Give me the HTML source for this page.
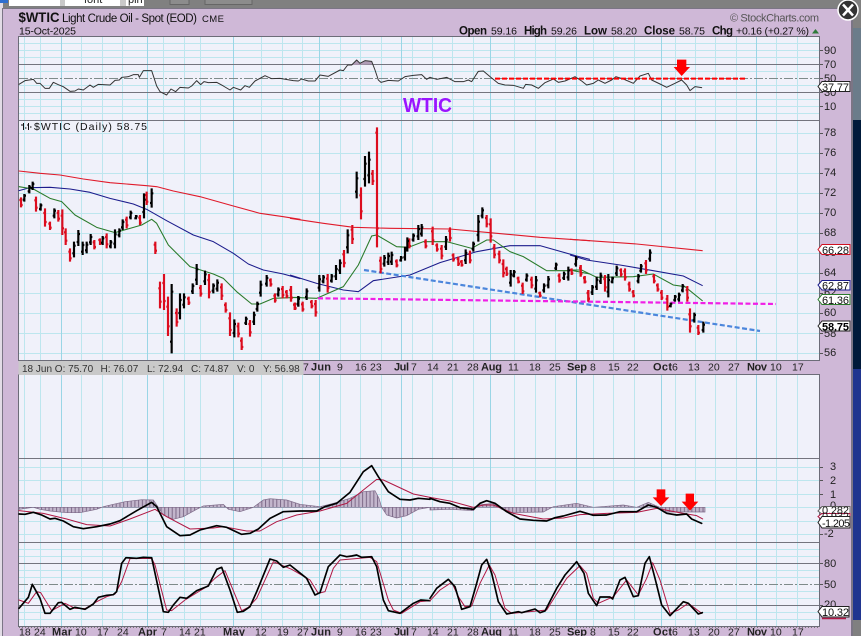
<!DOCTYPE html>
<html lang="en">
<head>
<meta charset="utf-8">
<title>$WTIC Light Crude Oil - Spot (EOD)</title>
<style>
html,body{margin:0;padding:0;width:861px;height:636px;overflow:hidden;background:#808080}
svg{display:block;font-family:"Liberation Sans",Arial,sans-serif}
.l{fill:none;stroke-linejoin:round;stroke-linecap:round}
</style>
</head>
<body>
<svg width="861" height="636" viewBox="0 0 861 636" xmlns="http://www.w3.org/2000/svg">
<defs>
<pattern id="h" patternUnits="userSpaceOnUse" width="11.2" height="12"><rect width="11.2" height="12" fill="#c3b6cc"/><rect width="3" height="12" fill="#7d6a88"/></pattern>
</defs>
<!-- window chrome -->
<rect width="861" height="636" fill="#808080"/>
<rect x="0" y="0" width="3" height="636" fill="#e2dce6"/>
<rect x="0" y="0" width="8" height="3" fill="#2f6fd0"/>
<rect x="9" y="0" width="51" height="6" fill="#fff"/>
<rect x="60" y="0" width="5" height="6" fill="#c9c9c9"/>
<rect x="65" y="0" width="55" height="6" fill="#fff"/>
<rect x="120" y="0" width="6" height="6" fill="#c9c9c9"/>
<rect x="126" y="0" width="18" height="6" fill="#fff"/>
<text x="84" y="3" font-size="11" fill="#222">font</text>
<text x="128" y="3" font-size="11" fill="#222">pin</text>
<path d="M170 0V4.5H189V0M205 0V4.5H252V0" fill="#8c8c8c" stroke="#666"/>
<rect x="853" y="28" width="8" height="92" fill="#6b7c8a"/>
<rect x="853" y="120" width="8" height="249" fill="#001a3a"/>
<rect x="853" y="369" width="8" height="251" fill="#20358f"/>
<rect x="2" y="8" width="851" height="628" fill="#7b7585"/>
<rect x="3" y="9" width="848" height="627" fill="#cfb8d7"/>

<!-- panels -->
<rect x="18.5" y="36.5" width="801" height="324" fill="#f0f1fa"/>
<rect x="18.5" y="374.5" width="801" height="252" fill="#f0f1fa"/>

<!-- horizontal light grid -->
<path stroke="#bde6ee" stroke-width="1" fill="none" d="M19 43.5H820M19 50.5H820M19 57.5H820M19 71.5H820M19 85.5H820M19 99.5H820M19 106.5H820M19 113.5H820
M19 133.5H820M19 153.5H820M19 173.5H820M19 193.5H820M19 213.5H820M19 233.5H820M19 253.5H820M19 273.5H820M19 293.5H820M19 313.5H820M19 333.5H820M19 353.5H820
M19 467.5H820M19 480.5H820M19 494.5H820M19 507.5H820M19 521.5H820M19 534.5H820
M19 549.5H820M19 556.5H820M19 570.5H820M19 577.5H820M19 591.5H820M19 598.5H820M19 612.5H820M19 619.5H820"/>
<!-- vertical light grid -->
<path stroke="#bde6ee" stroke-width="1" fill="none" d="M24.5 37V360M24.5 375V626M40.5 37V360M40.5 375V626M81.5 37V360M81.5 375V626M102.5 37V360M102.5 375V626M122.5 37V360M122.5 375V626M163.5 37V360M163.5 375V626M184.5 37V360M184.5 375V626M200.5 37V360M200.5 375V626M261.5 37V360M261.5 375V626M282.5 37V360M282.5 375V626M302.5 37V360M302.5 375V626M340.5 37V360M340.5 375V626M360.5 37V360M360.5 375V626M381.5 37V360M381.5 375V626M412.5 37V360M412.5 375V626M432.5 37V360M432.5 375V626M452.5 37V360M452.5 375V626M473.5 37V360M473.5 375V626M514.5 37V360M514.5 375V626M535.5 37V360M535.5 375V626M555.5 37V360M555.5 375V626M593.5 37V360M593.5 375V626M613.5 37V360M613.5 375V626M634.5 37V360M634.5 375V626M675.5 37V360M675.5 375V626M695.5 37V360M695.5 375V626M715.5 37V360M715.5 375V626M736.5 37V360M736.5 375V626M776.5 37V360M776.5 375V626M797.5 37V360M797.5 375V626"/>
<path stroke="#9ad6e6" stroke-width="1" fill="none" d="M61.5 37V360M61.5 375V626M147.5 37V360M147.5 375V626M233.5 37V360M233.5 375V626M319.5 37V360M319.5 375V626M401.5 37V360M401.5 375V626M490.5 37V360M490.5 375V626M576.5 37V360M576.5 375V626M661.5 37V360M661.5 375V626M756.5 37V360M756.5 375V626"/>

<!-- dark horizontal rules -->
<path stroke="#74747e" stroke-width="1" fill="none" d="M19 64.5H819M19 92.5H819M19 120.5H819M19 458.5H819M19 542.5H819M19 563.5H819M19 605.5H819"/>
<path stroke="#7e8a8a" stroke-width="1" fill="none" stroke-dasharray="9 2 2 2" d="M19 78.5H819M19 584.5H819"/>
<!-- panel borders -->
<path stroke="#6c6c78" stroke-width="1" fill="none" d="M18.5 36.5H819.5V360.5H18.5ZM18.5 374.5H819.5V626.5H18.5Z"/>
<path stroke="#777" stroke-width="1" fill="none" stroke-dasharray="1 2" d="M19 627.5H819"/>

<!-- RSI -->
<g transform="scale(.33333)">
<path fill="#b09cb6" d="M1058 195L1070 180L1080 190L1095 182L1115 184L1120 193Z"/>
<polyline class="l" stroke="#333" stroke-width="3" points="57,253 75,242 100,238 110,250 120,250 135,265 148,265 160,247 175,254 190,260 210,274 225,273 235,267 250,270 270,255 280,262 295,253 330,255 345,241 358,240 365,232 385,230 400,224 415,224 418,232 430,212 455,212 470,258 480,275 500,285 513,267 527,275 540,262 565,264 575,258 590,242 602,254 612,245 625,248 650,247 670,258 690,270 700,262 722,270 735,257 748,262 765,243 795,227 815,236 840,235 880,242 895,243 905,237 925,243 945,243 960,225 985,229 1020,210 1030,212 1043,195 1055,195 1070,180 1080,190 1095,182 1115,184 1125,210 1135,240 1143,247 1165,241 1195,243 1215,230 1240,226 1265,224 1280,238 1290,232"/>
</g>
<g transform="translate(430,0) scale(.33333)">
<polyline class="l" stroke="#333" stroke-width="3" points="0,232 20,238 50,232 75,245 100,245 115,240 125,245 145,214 160,213 180,230 205,250 225,255 250,256 280,265 287,253 305,255 325,265 345,248 370,237 385,247 405,243 435,230 455,243 470,255 490,250 505,240 525,250 545,240 558,230 580,237 610,250 630,228 655,220 665,240 690,252 710,262 735,250 755,240 770,255 780,272 795,260 815,263"/>
<path stroke="#f00" stroke-width="6" fill="none" stroke-dasharray="15 6" d="M195 236H945"/>
<path fill="#f00" d="M741 179H769V201H780L755 228L731 201H741Z"/>
</g>
<text x="403" y="112" font-size="20" font-weight="bold" fill="#9a14ff" textLength="49" lengthAdjust="spacingAndGlyphs">WTIC</text>

<!-- price moving averages & trendlines -->
<g transform="translate(0,120) scale(.33333)" class="l" stroke-width="3.2">
<polyline fill="none" stroke="#e01a2a" points="57,153 120,160 180,165 250,177 330,188 440,197 470,200 520,213 600,230 700,258 780,280 850,290 900,298"/>
<polyline fill="none" stroke="#1c1c8c" points="57,212 90,203 150,202 210,207 270,217 330,235 400,252 440,268 500,302 580,345 640,365 700,400 745,432 790,450 850,462 900,476"/>
<polyline fill="none" stroke="#2a7a2a" points="57,200 100,207 150,235 185,245 225,285 290,322 345,338 390,325 425,315 455,298 470,310 505,375 570,440 640,462 670,475 710,515 755,552 780,552 820,535 900,532"/>
</g>
<g transform="translate(290,120) scale(.33333)" stroke-width="3.2" fill="none">
<polyline stroke="#e01a2a" points="0,295 100,310 190,322 300,325 480,327 600,338 750,352 900,362"/>
<polyline stroke="#1c1c8c" points="0,465 80,490 160,510 205,515 250,482 360,465 450,428 560,395 660,377 750,377 860,408 900,418"/>
<polyline stroke="#2a7a2a" points="0,532 80,535 160,500 205,435 245,348 260,345 320,380 355,382 400,365 470,365 545,385 590,360 610,360 660,395 700,410 770,452 850,452 900,462"/>
</g>
<g transform="translate(570,120) scale(.33333)" stroke-width="3.2" fill="none">
<polyline stroke="#e01a2a" points="0,358 200,372 398,392"/>
<polyline stroke="#1c1c8c" points="0,405 50,420 150,435 250,452 340,468 398,497"/>
<polyline stroke="#2a7a2a" points="0,450 35,450 80,472 190,470 250,462 310,495 345,500 398,543"/>
</g>
<path stroke="#4c86dc" stroke-width="2.2" stroke-dasharray="5 2.5" fill="none" d="M364 270L760 331"/>
<path stroke="#f01fe6" stroke-width="2.2" stroke-dasharray="5 2.5" fill="none" d="M318 298.3L776 304"/>

<!-- price bars -->
<g transform="translate(0,120) scale(.33333)" fill="none" stroke-width="6.5">
<path stroke="#dc0c1e" d="M63 232V262m-5-22h5m0 15h5M108 230V275m-5-34h5m0 22h5M135 265V320m-5-41h5m0 27h5M150 305V330m-5-19h5m0 12h5M175 270V305m-5-26h5m0 17h5M187 268V345m-5-58h5m0 38h5M197 325V375m-5-38h5m0 25h5M210 385V425m-5-30h5m0 20h5M283 360V388m-5-21h5m0 14h5M300 355V375m-5-15h5m0 10h5M320 340V385m-5-34h5m0 22h5M380 290V325m-5-26h5m0 17h5M420 285V315m-5-22h5m0 15h5M440 215V255m-5-30h5m0 20h5M466 365V402m-5-28h5m0 18h5M480 485V565m-5-60h5m0 40h5M492 462V570m-5-81h5m0 54h5M504 530V648m-5-88h5m0 59h5M530 565V620m-5-41h5m0 27h5M566 530V555m-5-19h5m0 12h5M602 495V530m-5-26h5m0 17h5M627 462V535m-5-55h5m0 36h5M665 490V540m-5-38h5m0 25h5M677 547V578m-5-23h5m0 15h5M690 577V648m-5-53h5m0 35h5M715 608V652m-5-33h5m0 22h5M725 652V690m-5-28h5m0 19h5M750 600V650m-5-38h5m0 25h5M812 475V500m-5-19h5m0 12h5M825 520V548m-5-21h5m0 14h5M848 498V535m-5-28h5m0 18h5M860 510V535m-5-19h5m0 12h5M873 498V545m-5-35h5m0 23h5M885 548V570m-5-16h5m0 11h5"/>
<path stroke="#000" d="M73 222V245m-5-6h5m0-12h5M88 195V220m-5-6h5m0-12h5M98 185V210m-5-6h5m0-12h5M122 250V272m-5-5h5m0-11h5M163 265V295m-5-8h5m0-15h5M222 365V412m-5-12h5m0-23h5M235 330V378m-5-12h5m0-24h5M248 365V405m-5-10h5m0-20h5M260 365V400m-5-9h5m0-17h5M272 342V375m-5-8h5m0-16h5M308 348V375m-5-7h5m0-13h5M332 360V385m-5-6h5m0-12h5M345 328V385m-5-14h5m0-28h5M358 325V352m-5-7h5m0-13h5M368 298V330m-5-8h5m0-16h5M392 272V298m-5-6h5m0-13h5M408 285V298m-5-3h5m0-6h5M432 220V295m-5-19h5m0-37h5M455 205V263m-5-14h5m0-29h5M515 492V700m-5-35h5m0-150h5M540 520V598m-5-19h5m0-39h5M552 520V565m-5-11h5m0-22h5M578 490V522m-5-8h5m0-16h5M590 432V495m-5-16h5m0-31h5M615 452V495m-5-11h5m0-21h5M640 490V520m-5-8h5m0-15h5M652 478V515m-5-9h5m0-18h5M703 598V652m-5-13h5m0-27h5M738 590V615m-5-6h5m0-12h5M762 575V615m-5-10h5m0-20h5M772 545V575m-5-8h5m0-15h5M782 482V530m-5-12h5m0-24h5M800 465V500m-5-9h5m0-17h5M835 502V530m-5-7h5m0-14h5M895 528V560m-5-8h5m0-16h5"/>
</g>
<g transform="translate(290,120) scale(.33333)" fill="none" stroke-width="6.5">
<path stroke="#dc0c1e" d="M3 498V545m-5-35h5m0 23h5M14 548V570m-5-16h5m0 11h5M38 545V575m-5-22h5m0 15h5M65 540V565m-5-19h5m0 12h5M77 540V590m-5-38h5m0 25h5M113 462V518m-5-42h5m0 28h5M162 390V442m-5-39h5m0 26h5M187 315V372m-5-43h5m0 28h5M213 202V298m-5-72h5m0 48h5M248 150V195m-5-34h5m0 22h5M261 22V382m-5-344h5m0 287h5M272 410V460m-5-38h5m0 25h5M320 418V442m-5-18h5m0 12h5M358 355V385m-5-22h5m0 15h5M407 358V385m-5-20h5m0 13h5M428 320V375m-5-41h5m0 27h5M441 370V395m-5-19h5m0 12h5M455 375V418m-5-32h5m0 21h5M480 322V365m-5-32h5m0 21h5M490 400V425m-5-19h5m0 12h5M505 410V438m-5-21h5m0 14h5M515 420V440m-5-15h5m0 10h5M540 392V430m-5-28h5m0 19h5M590 285V322m-5-28h5m0 18h5M602 295V368m-5-55h5m0 36h5M613 372V415m-5-32h5m0 21h5M628 392V430m-5-28h5m0 19h5M640 418V472m-5-40h5m0 27h5M650 440V468m-5-21h5m0 14h5M685 470V490m-5-15h5m0 10h5M698 488V522m-5-25h5m0 17h5M725 470V505m-5-26h5m0 17h5M750 515V532m-5-13h5m0 8h5M808 460V488m-5-21h5m0 14h5M845 445V465m-5-15h5m0 10h5M872 435V470m-5-26h5m0 17h5M884 468V490m-5-16h5m0 11h5M895 510V545m-5-26h5m0 17h5"/>
<path stroke="#000" d="M25 528V560m-5-8h5m0-16h5M50 505V540m-5-9h5m0-17h5M88 465V515m-5-12h5m0-25h5M100 465V490m-5-6h5m0-12h5M125 462V488m-5-6h5m0-13h5M138 435V480m-5-11h5m0-22h5M150 418V462m-5-11h5m0-22h5M173 328V400m-5-18h5m0-36h5M200 155V235m-5-20h5m0-40h5M225 108V200m-5-23h5m0-46h5M237 95V190m-5-24h5m0-47h5M283 405V440m-5-9h5m0-17h5M295 398V435m-5-9h5m0-18h5M305 395V435m-5-10h5m0-20h5M333 408V425m-5-4h5m0-8h5M345 380V422m-5-10h5m0-21h5M352 352V395m-5-11h5m0-21h5M370 340V365m-5-6h5m0-12h5M385 315V360m-5-11h5m0-22h5M395 312V350m-5-9h5m0-19h5M468 348V390m-5-10h5m0-21h5M527 388V432m-5-11h5m0-22h5M550 365V395m-5-8h5m0-15h5M565 285V365m-5-20h5m0-40h5M577 262V295m-5-8h5m0-16h5M662 450V500m-5-12h5m0-25h5M672 450V472m-5-5h5m0-11h5M710 460V485m-5-6h5m0-12h5M738 468V518m-5-12h5m0-25h5M762 490V518m-5-7h5m0-14h5M775 468V505m-5-9h5m0-18h5M798 428V450m-5-5h5m0-11h5M822 455V480m-5-6h5m0-12h5M835 440V482m-5-10h5m0-21h5M858 408V440m-5-8h5m0-16h5"/>
</g>
<g transform="translate(570,120) scale(.33333)" fill="none" stroke-width="6.5">
<path stroke="#dc0c1e" d="M32 435V470m-5-26h5m0 17h5M44 468V490m-5-16h5m0 11h5M55 510V545m-5-26h5m0 17h5M105 465V515m-5-38h5m0 25h5M153 445V470m-5-19h5m0 12h5M165 445V482m-5-28h5m0 18h5M178 485V515m-5-22h5m0 15h5M190 510V532m-5-16h5m0 11h5M228 420V462m-5-32h5m0 21h5M252 462V490m-5-21h5m0 14h5M263 490V515m-5-19h5m0 12h5M275 510V540m-5-22h5m0 15h5M292 525V572m-5-35h5m0 23h5M352 498V545m-5-35h5m0 23h5M360 565V638m-5-55h5m0 36h5M385 615V645m-5-22h5m0 15h5"/>
<path stroke="#000" d="M67 495V525m-5-8h5m0-15h5M80 470V510m-5-10h5m0-20h5M92 458V492m-5-8h5m0-17h5M115 462V532m-5-17h5m0-35h5M127 470V490m-5-5h5m0-10h5M140 437V468m-5-8h5m0-15h5M205 462V490m-5-7h5m0-14h5M213 432V458m-5-6h5m0-13h5M240 388V425m-5-9h5m0-18h5M302 548V562m-5-4h5m0-7h5M315 525V545m-5-5h5m0-10h5M327 518V545m-5-7h5m0-13h5M338 492V517m-5-6h5m0-12h5M373 578V608m-5-8h5m0-15h5M400 605V638m-5-8h5m0-16h5"/>
</g>

<!-- MACD -->
<g transform="translate(0,450) scale(.33333)">
<polygon fill="url(#h)" stroke="#7d6a88" stroke-width="2" points="57,172 57,178 100,172 120,178 150,183 200,188 240,188 290,178 310,170 340,163 375,155 425,149 460,150 475,172 490,195 520,208 550,200 590,178 610,168 670,163 685,178 720,185 760,172 790,150 810,146 860,150 900,163 960,170 1000,160 1050,145 1090,125 1125,122 1137,145 1145,172 1160,195 1190,204 1220,197 1255,178 1290,172"/>
<polyline class="l" stroke="#b01844" stroke-width="3" points="57,182 130,190 200,207 260,224 330,228 390,207 465,178 500,200 570,237 640,234 670,230 740,243 780,243 830,215 890,195 960,183 1040,160 1090,120 1130,88 1150,90 1240,132 1290,142"/>
<polyline class="l" stroke="#000" stroke-width="5" points="57,192 75,193 100,187 125,195 150,207 165,205 190,213 220,230 250,236 290,230 330,222 360,212 410,182 455,157 470,170 500,230 540,257 570,255 600,240 650,227 680,232 725,253 750,250 775,237 810,205 850,185 900,183 950,183 975,170 1010,160 1050,127 1090,65 1115,47 1135,80 1165,125 1200,148 1230,150 1255,145 1290,148"/>
<!-- Stochastics -->
<polyline class="l" stroke="#b01844" stroke-width="3" points="57,450 85,460 110,425 122,428 155,482 195,460 225,475 255,476 290,455 320,440 345,432 365,395 390,326 455,325 465,345 500,480 515,482 555,450 620,410 645,385 675,362 725,482 745,472 770,445 820,335 875,358 930,390 955,430 975,425 1000,355 1020,330 1110,322 1130,335 1165,450 1180,480 1205,490 1260,455 1290,452"/>
<polyline class="l" stroke="#000" stroke-width="5" points="57,475 85,442 97,403 120,445 135,490 150,490 175,458 185,457 210,478 225,472 255,478 280,462 295,442 320,436 340,434 350,425 365,340 378,323 410,325 430,322 455,323 490,485 505,487 520,465 540,442 560,445 590,422 625,408 650,358 665,352 690,420 712,487 730,484 750,470 770,425 810,327 830,333 850,352 870,345 920,385 945,435 960,428 985,350 1020,315 1040,320 1055,318 1070,315 1085,322 1115,320 1130,350 1150,450 1165,482 1200,490 1220,475 1240,460 1262,450 1290,452"/>
</g>
<g transform="translate(430,450) scale(.33333)">
<polygon fill="url(#h)" stroke="#7d6a88" stroke-width="2" points="0,172 0,180 60,178 130,182 145,165 190,160 215,178 240,188 340,186 370,170 440,160 490,172 580,165 620,172 655,157 690,172 700,186 825,186 825,172"/>
<polyline class="l" stroke="#b01844" stroke-width="3" points="0,142 60,153 130,172 160,165 190,165 250,190 340,207 400,204 450,194 530,190 620,187 680,175 760,190 800,197 818,207"/>
<polyline class="l" stroke="#000" stroke-width="5" points="0,145 30,155 60,160 90,173 130,178 150,160 170,152 195,160 230,185 270,207 310,211 350,213 375,203 400,198 450,184 490,196 530,195 570,185 620,185 655,165 680,172 710,190 740,195 770,192 785,207 815,220"/>
<path fill="#f00" d="M680 118H706V142H718L693 168L668 142H680ZM767 131H792V155H805L780 182L755 155H767Z"/>
<polyline class="l" stroke="#b01844" stroke-width="3" points="0,452 30,420 65,397 85,440 105,470 125,468 150,400 178,345 195,375 225,475 245,490 320,483 350,480 375,440 410,385 450,347 470,370 490,445 505,460 550,440 590,390 625,435 650,385 668,338 690,390 720,490 745,480 775,460 815,490"/>
<polyline class="l" stroke="#000" stroke-width="5" points="0,445 20,415 55,388 75,410 95,478 120,470 140,400 155,345 170,328 185,370 205,455 230,492 265,485 275,488 315,477 330,488 345,483 380,415 405,375 440,335 462,370 475,430 500,467 510,441 540,441 548,447 570,390 585,382 610,440 625,437 645,340 658,320 675,385 695,465 720,497 760,455 775,460 805,492 817,488"/>
</g>

<!-- header text -->
<g fill="#111">
<text x="18.5" y="22" font-size="13.5" font-weight="bold" textLength="41" lengthAdjust="spacingAndGlyphs">$WTIC</text>
<text x="62" y="22" font-size="11.5" textLength="135">Light Crude Oil - Spot (EOD)</text>
<text x="202" y="22" font-size="9.5" textLength="22">CME</text>
<text x="19" y="34.5" font-size="10.5" textLength="57">15-Oct-2025</text>
<text x="730" y="21.5" font-size="11" fill="#555" textLength="89">© StockCharts.com</text>
<g font-size="10.5">
<text x="459" y="34.5" font-weight="bold" font-size="11.5" textLength="28">Open</text><text x="491" y="34.5" textLength="26">59.16</text>
<text x="524" y="34.5" font-weight="bold" font-size="11.5" textLength="23">High</text><text x="551" y="34.5" textLength="26">59.26</text>
<text x="584" y="34.5" font-weight="bold" font-size="11.5" textLength="23">Low</text><text x="611" y="34.5" textLength="26">58.20</text>
<text x="644" y="34.5" font-weight="bold" font-size="11.5" textLength="31">Close</text><text x="679" y="34.5" textLength="26">58.75</text>
<text x="712" y="34.5" font-weight="bold" font-size="11.5" textLength="21">Chg</text><text x="736" y="34.5" textLength="73">+0.16 (+0.27 %)</text>
</g>
</g>
<path d="M812 33.5L815.5 29L819 33.5Z" fill="#2f7a3a"/>
<text x="34" y="130" font-size="10.5" fill="#111" textLength="113">$WTIC (Daily) 58.75</text>
<path stroke="#111" stroke-width="1" fill="none" d="M21 125h2M23.5 123V130M25 128h1.5M27 125h1.5M28.5 123V130M30 127h1.5"/>

<!-- legend bar -->
<rect x="18.5" y="361" width="285" height="14" fill="#c9c9c9"/>
<g fill="#333" font-size="10">
<text x="22" y="372">18 Jun O: 75.70</text><text x="100.5" y="372">H: 76.07</text><text x="147" y="372">L: 72.94</text><text x="191" y="372">C: 74.87</text><text x="237" y="372">V: 0</text><text x="263" y="372">Y: 56.98</text>
</g>

<!-- top date axis -->
<g fill="#222" font-size="10.5">
<text x="303" y="370.5">7</text><text x="311" y="370.5" font-weight="bold" font-size="11" textLength="20">Jun</text><text x="337" y="370.5">9</text><text x="355" y="370.5">16</text><text x="370" y="370.5">23</text><text x="394" y="370.5" font-weight="bold" font-size="11" textLength="15">Jul</text><text x="411" y="370.5">7</text><text x="427" y="370.5">14</text><text x="447" y="370.5">21</text><text x="467" y="370.5">28</text><text x="481" y="370.5" font-weight="bold" font-size="11" textLength="21">Aug</text><text x="508" y="370.5">11</text><text x="529" y="370.5">18</text><text x="549" y="370.5">25</text><text x="567" y="370.5" font-weight="bold" font-size="11" textLength="20">Sep</text><text x="590" y="370.5">8</text><text x="608" y="370.5">15</text><text x="627" y="370.5">22</text><text x="653" y="370.5" font-weight="bold" font-size="11" textLength="19">Oct</text><text x="672" y="370.5">6</text><text x="688" y="370.5">13</text><text x="708" y="370.5">20</text><text x="728" y="370.5">27</text><text x="747" y="370.5" font-weight="bold" font-size="11" textLength="20">Nov</text><text x="770" y="370.5">10</text><text x="792" y="370.5">17</text>
</g>
<!-- bottom date axis -->
<g fill="#222" font-size="10.5">
<text x="19" y="635.5">18</text><text x="34" y="635.5">24</text><text x="52" y="635.5" font-weight="bold" font-size="11" textLength="20">Mar</text><text x="75" y="635.5">10</text><text x="97" y="635.5">17</text><text x="117" y="635.5">24</text><text x="138" y="635.5" font-weight="bold" font-size="11" textLength="19">Apr</text><text x="161" y="635.5">7</text><text x="179" y="635.5">14</text><text x="194" y="635.5">21</text><text x="223" y="635.5" font-weight="bold" font-size="11" textLength="22">May</text><text x="255" y="635.5">12</text><text x="277" y="635.5">19</text><text x="297" y="635.5">27</text><text x="311" y="635.5" font-weight="bold" font-size="11" textLength="20">Jun</text><text x="337" y="635.5">9</text><text x="355" y="635.5">16</text><text x="370" y="635.5">23</text><text x="394" y="635.5" font-weight="bold" font-size="11" textLength="15">Jul</text><text x="411" y="635.5">7</text><text x="427" y="635.5">14</text><text x="447" y="635.5">21</text><text x="467" y="635.5">28</text><text x="481" y="635.5" font-weight="bold" font-size="11" textLength="21">Aug</text><text x="508" y="635.5">11</text><text x="529" y="635.5">18</text><text x="549" y="635.5">25</text><text x="567" y="635.5" font-weight="bold" font-size="11" textLength="20">Sep</text><text x="590" y="635.5">8</text><text x="608" y="635.5">15</text><text x="627" y="635.5">22</text><text x="653" y="635.5" font-weight="bold" font-size="11" textLength="19">Oct</text><text x="672" y="635.5">6</text><text x="688" y="635.5">13</text><text x="708" y="635.5">20</text><text x="728" y="635.5">27</text><text x="747" y="635.5" font-weight="bold" font-size="11" textLength="20">Nov</text><text x="770" y="635.5">10</text><text x="792" y="635.5">17</text>
</g>

<!-- right axis ticks -->
<path stroke="#555" stroke-width="1" fill="none" d="M820 50.5h3M820 64.5h3M820 78.5h3M820 92.5h3M820 106.5h3M820 133.5h3M820 153.5h3M820 173.5h3M820 193.5h3M820 213.5h3M820 233.5h3M820 253.5h3M820 273.5h3M820 293.5h3M820 313.5h3M820 333.5h3M820 353.5h3M820 467.5h3M820 480.5h3M820 494.5h3M820 507.5h3M820 534.5h3M820 563.5h3M820 584.5h3M820 605.5h3"/>
<g fill="#222" font-size="11">
<text x="824" y="54">90</text><text x="824" y="68">70</text><text x="824" y="82">50</text><text x="824" y="96">30</text><text x="824" y="110">10</text>
<text x="824" y="136">78</text><text x="824" y="156">76</text><text x="824" y="176">74</text><text x="824" y="196">72</text><text x="824" y="216">70</text><text x="824" y="236">68</text><text x="824" y="256">66</text><text x="824" y="276">64</text><text x="824" y="296">62</text><text x="824" y="316">60</text><text x="824" y="337">58</text><text x="824" y="356">56</text>
<text x="830" y="470">3</text><text x="830" y="484">2</text><text x="830" y="498">1</text><text x="830" y="509">0</text><text x="824" y="537">-2</text>
<text x="824" y="567">80</text><text x="824" y="588">50</text><text x="824" y="608">20</text>
</g>

<!-- value flags -->
<g font-size="11" stroke-width="1">
<path d="M818 86.5L822 81.5H850V91.5H822Z" fill="#fff" stroke="#222"/><text x="822" y="91" fill="#111" textLength="27">37.77</text>
<path d="M818 249.5L822 244.5H850V254.5H822Z" fill="#fff" stroke="#d01020"/><text x="822" y="254" fill="#111" textLength="27">66.28</text>
<path d="M818 285L822 280.5H850V290H822Z" fill="#fff" stroke="#1c1c8c"/><text x="822" y="289.5" fill="#111" textLength="27">62.87</text>
<path d="M818 299.5L822 294.5H850V304.5H822Z" fill="#fff" stroke="#2a7a2a"/><text x="822" y="304" fill="#111" textLength="27">61.36</text>
<path d="M818 326L822 321H850V331H822Z" fill="#fff" stroke="#222"/><text x="822" y="330.5" fill="#000" font-weight="bold" textLength="27">58.75</text>
<path d="M818 511L822 506.5H850V514H822Z" fill="#fff" stroke="#666"/><text x="822" y="514" fill="#111" textLength="27">0.282</text>
<path d="M818 516.5L822 513.5H850V520H822Z" fill="#fff" stroke="#b01844"/><text x="822" y="520" fill="#111" textLength="27">0.932</text>
<path d="M818 522.5L822 516.5H850V528H822Z" fill="#fff" stroke="#222"/><text x="822" y="527" fill="#111" textLength="28">-1.205</text>
<path d="M822 618.5H846" stroke="#b01844" stroke-width="1.5" fill="none"/>
<path d="M818 611.5L822 606.5H849V617H822Z" fill="#fff" stroke="#222"/><text x="822" y="616" fill="#111" textLength="27">10.32</text>
</g>

<!-- close button -->
<circle cx="848" cy="10" r="10" fill="#333" stroke="#fff" stroke-width="1.5"/>
<path d="M843 4.5L853 15.5M853 4.5L843 15.5" stroke="#fff" stroke-width="2.5" fill="none"/>
</svg>
</body>
</html>
